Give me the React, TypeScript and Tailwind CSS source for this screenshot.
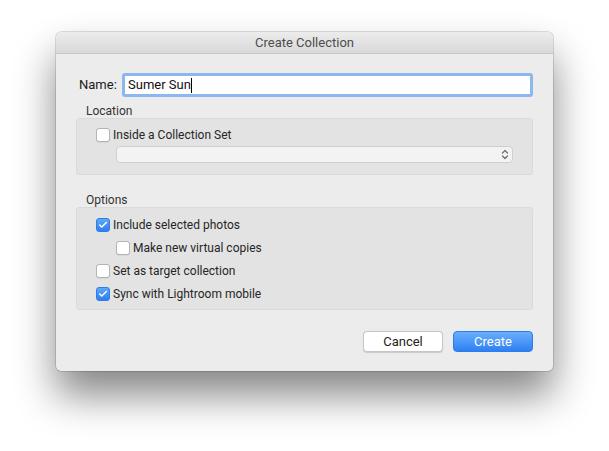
import { Check } from 'lucide-react';

function Box({ checked }: { checked?: boolean }) {
  return checked ? (
    <span className="w-[14px] h-[14px] rounded-[3px] bg-gradient-to-b from-[#5ea7f8] to-[#2c7ef0] border border-[#2f7ce6] flex items-center justify-center shrink-0">
      <Check size={10} strokeWidth={3.5} className="text-white" />
    </span>
  ) : (
    <span className="w-[14px] h-[14px] rounded-[3px] bg-white border border-[#b4b4b4] shadow-[0_0.5px_0.5px_rgba(0,0,0,0.1)] shrink-0" />
  );
}

function Row({ label, checked, indent }: { label: string; checked?: boolean; indent?: boolean }) {
  return (
    <div className={`flex items-center gap-[3px] h-[23px] ${indent ? 'pl-[39px]' : 'pl-[19px]'}`}>
      <Box checked={checked} />
      <span className="text-[12px] text-[#262626]">{label}</span>
    </div>
  );
}

export default function App() {
  return (
    <main className="w-[609px] h-[451px] bg-white pt-[32px] pl-[56px] overflow-hidden" style={{ fontFamily: 'Roboto, "Liberation Sans", sans-serif' }}>
      <div className="w-[497px] h-[339px] bg-[#ececec] rounded-[5px] shadow-[0_24px_40px_rgba(0,0,0,0.48),0_0_0_0.5px_rgba(0,0,0,0.25)] flex flex-col overflow-hidden">
        {/* title bar */}
        <div className="h-[22px] bg-gradient-to-b from-[#ececec] to-[#d9d9d9] border-b border-[#c6c6c6] flex items-center justify-center text-[13px] text-[#4d4d4d] shrink-0">
          Create Collection
        </div>

        <div className="px-[20px] pt-[19px] flex flex-col">
          {/* name */}
          <div className="flex items-center">
            <span className="text-[13px] text-[#1a1a1a] pl-[3px] w-[46px]">Name:</span>
            <div className="flex-1 h-[24px] border-[3px] border-[#8cb7ef] rounded-[3px] bg-white flex items-center pl-[3px] text-[13px] text-[#111]">
              Sumer Sun<span className="w-px h-[15px] bg-black" />
            </div>
          </div>

          {/* location */}
          <div className="text-[12px] text-[#333] pl-[10px] mt-[7px] h-[14px] leading-[14px]">Location</div>
          <div className="h-[57px] bg-[#e3e3e3] border border-[#dadada] rounded-[3px] pt-[4px]">
            <Row label="Inside a Collection Set" />
            <div className="ml-[39px] mr-[19px] h-[17px] bg-[#f3f3f3] border border-[#cfcfcf] rounded-[4px] flex items-center justify-end pr-[3px]">
              <svg width="8" height="11" viewBox="0 0 8 11" fill="none" stroke="#6e6e6e" strokeWidth="1.3" strokeLinecap="round" strokeLinejoin="round">
                <path d="M1.5 4 L4 1.5 L6.5 4" />
                <path d="M1.5 7 L4 9.5 L6.5 7" />
              </svg>
            </div>
          </div>

          {/* options */}
          <div className="text-[12px] text-[#333] pl-[10px] mt-[18px] h-[14px] leading-[14px]">Options</div>
          <div className="h-[103px] bg-[#e3e3e3] border border-[#dadada] rounded-[3px] pt-[5px]">
            <Row label="Include selected photos" checked />
            <Row label="Make new virtual copies" indent />
            <Row label="Set as target collection" />
            <Row label="Sync with Lightroom mobile" checked />
          </div>

          {/* buttons */}
          <div className="flex justify-end gap-[10px] mt-[21px]">
            <button className="w-[80px] h-[21px] bg-white border border-[#c6c6c6] rounded-[4px] text-[13px] text-[#222] shadow-[0_0.5px_1px_rgba(0,0,0,0.15)]">
              Cancel
            </button>
            <button className="w-[80px] h-[21px] bg-gradient-to-b from-[#6aaefb] to-[#2d7ff4] border border-[#2f7be8] rounded-[4px] text-[13px] text-white">
              Create
            </button>
          </div>
        </div>
      </div>
    </main>
  );
}
